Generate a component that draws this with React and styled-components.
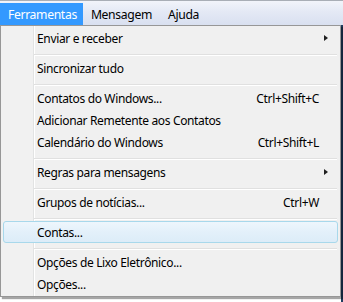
import React from "react"
import styled, { createGlobalStyle } from "styled-components"

const GlobalStyle = createGlobalStyle`
  html, body {
    margin: 0;
    padding: 0;
    background: #ffffff;
    overflow: hidden;
  }
  body {
    font-family: "Noto Sans", "Open Sans", "DejaVu Sans", sans-serif;
    font-size: 12px;
    letter-spacing: -0.35px;
    color: #000;
  }
`

const Screen = styled.div`
  width: 343px;
  height: 302px;
  display: flex;
  flex-direction: column;
`

const MenuBar = styled.div`
  height: 24px;
  display: flex;
  align-items: stretch;
  border-top: 1px solid #a9aeb6;
  background: linear-gradient(to bottom, #f2f4fa 0%, #e4e9f5 45%, #d9e0f0 100%);
`

const BarItem = styled.div`
  display: flex;
  align-items: center;
  margin-top: 2px;
  padding: ${props => (props.first ? "0 6px 0 8px" : "0 8px")};
  color: ${props => (props.active ? "#ffffff" : "#000000")};
  background: ${props => (props.active ? "#3399ff" : "transparent")};
  font-size: 12.2px;
`

const Workspace = styled.div`
  position: relative;
  flex: 1;
  background: linear-gradient(to right, #ffffff 341px, #1f3b5e 341px);
`

const Dropdown = styled.div`
  position: absolute;
  top: 0;
  left: 0;
  width: 339px;
  padding: 1px 0 1px;
  border: 1px solid #979797;
  background: linear-gradient(
    to right,
    #f1f1f1 32px,
    #e2e3e3 32px,
    #e2e3e3 33px,
    #ffffff 33px,
    #ffffff 34px,
    #f0f0f0 34px
  );
  box-shadow: 2px 2px 1px rgba(0, 0, 0, 0.35);
`

const Item = styled.div`
  position: relative;
  height: 22px;
  margin: 0 2px;
  display: flex;
  align-items: center;
  padding: 0 18px 0 33px;
  box-sizing: border-box;
  border: 1px solid ${props => (props.hover ? "#a8d8eb" : "transparent")};
  border-radius: 3px;
  background: ${props =>
    props.hover
      ? "linear-gradient(to bottom, #eef6fc 0%, #e3f0fa 50%, #dcecf8 100%)"
      : "transparent"};
`

const Label = styled.span`
  flex: 1;
  white-space: nowrap;
`

const Shortcut = styled.span`
  white-space: nowrap;
`

const Arrow = styled.span`
  position: absolute;
  right: 9px;
  top: 7px;
  width: 0;
  height: 0;
  border-top: 3.5px solid transparent;
  border-bottom: 3.5px solid transparent;
  border-left: 4px solid #202020;
`

const Separator = styled.div`
  height: 8px;
  padding: 5px 0 1px 33px;
  box-sizing: border-box;

  &::before {
    content: "";
    display: block;
    margin-right: 3px;
    height: 1px;
    background: #e0e0e0;
    border-bottom: 1px solid #ffffff;
  }
`

const groups = [
  [{ label: "Enviar e receber", sub: true }],
  [{ label: "Sincronizar tudo" }],
  [
    { label: "Contatos do Windows...", key: "Ctrl+Shift+C" },
    { label: "Adicionar Remetente aos Contatos" },
    { label: "Calendário do Windows", key: "Ctrl+Shift+L" },
  ],
  [{ label: "Regras para mensagens", sub: true }],
  [{ label: "Grupos de notícias...", key: "Ctrl+W" }],
  [{ label: "Contas...", hover: true }],
  [{ label: "Opções de Lixo Eletrônico..." }, { label: "Opções..." }],
]

const App = () => {
  return (
    <Screen>
      <GlobalStyle />
      <MenuBar>
        <BarItem active first>
          Ferramentas
        </BarItem>
        <BarItem>Mensagem</BarItem>
        <BarItem>Ajuda</BarItem>
      </MenuBar>
      <Workspace>
        <Dropdown>
          {groups.map((group, gi) => (
            <React.Fragment key={gi}>
              {gi > 0 && <Separator />}
              {group.map(item => (
                <Item key={item.label} hover={item.hover}>
                  <Label>{item.label}</Label>
                  {item.key && <Shortcut>{item.key}</Shortcut>}
                  {item.sub && <Arrow />}
                </Item>
              ))}
            </React.Fragment>
          ))}
        </Dropdown>
      </Workspace>
    </Screen>
  )
}

export default App
